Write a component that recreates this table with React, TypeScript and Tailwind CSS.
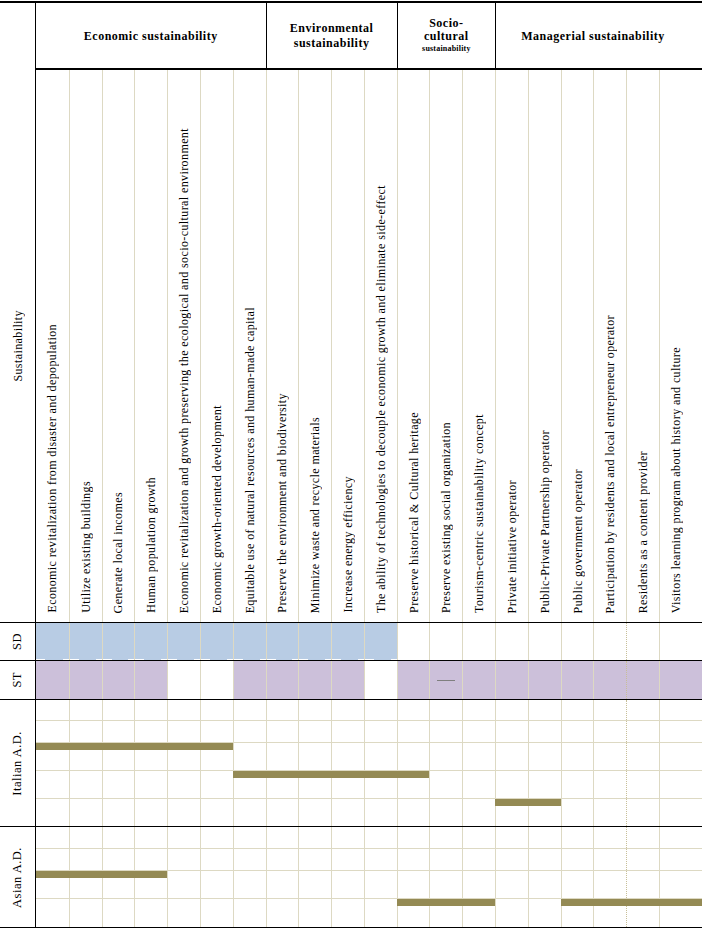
const COLS = "grid grid-cols-[36px_repeat(19,minmax(0,1fr))_43px]";
const DATA_COLS = "grid grid-cols-[repeat(19,minmax(0,1fr))_43px]";
const SERIF = "font-['Liberation_Serif','Times_New_Roman',serif]";

const criteria = [
  "Economic revitalization from disaster and depopulation",
  "Utilize existing buildings",
  "Generate local incomes",
  "Human population growth",
  "Economic revitalization and growth preserving the ecological and socio-cultural environment",
  "Economic growth-oriented development",
  "Equitable use of natural resources and human-made capital",
  "Preserve the environment and biodiversity",
  "Minimize waste and recycle materials",
  "Increase energy efficiency",
  "The ability of technologies to decouple economic growth and eliminate side-effect",
  "Preserve historical & Cultural heritage",
  "Preserve existing social organization",
  "Tourism-centric sustainability concept",
  "Private initiative operator",
  "Public-Private Partnership operator",
  "Public government operator",
  "Participation by residents and local entrepreneur operator",
  "Residents as a content provider",
  "Visitors learning program about history and culture",
];

const sd = [1, 1, 1, 1, 1, 1, 1, 1, 1, 1, 1, 0, 0, 0, 0, 0, 0, 0, 0, 0];
const st = [1, 1, 1, 1, 0, 0, 1, 1, 1, 1, 0, 1, 1, 1, 1, 1, 1, 1, 1, 1];

type Bar = { row: number; cls: string };

const italianBars: Bar[] = [
  { row: 2, cls: "col-start-1 col-span-6" },
  { row: 3, cls: "col-start-7 col-span-6" },
  { row: 4, cls: "col-start-15 col-span-2" },
];

const asianBars: Bar[] = [
  { row: 2, cls: "col-start-1 col-span-4" },
  { row: 3, cls: "col-start-12 col-span-3" },
  { row: 3, cls: "col-start-17 col-span-4" },
];

// left border of data column i (0-based); column 18 turns dotted below the text row
function edge(i: number, dotted = false) {
  if (i === 0) return "";
  if (dotted && i === 18) return "border-l border-dotted border-[#c8bf98]";
  return "border-l border-[#ddd9c3]";
}

function Vertical({ children, className = "" }: { children: React.ReactNode; className?: string }) {
  return (
    <span className={`[writing-mode:vertical-rl] rotate-180 whitespace-nowrap leading-none ${className}`}>
      {children}
    </span>
  );
}

function Label({ text, size = "text-[12px] tracking-[0.4px]" }: { text: string; size?: string }) {
  return (
    <div className="h-full border-r border-black flex items-center justify-center">
      <Vertical className={size}>{text}</Vertical>
    </div>
  );
}

function Block({ label, heights, bars, last }: { label: string; heights: string[]; bars: Bar[]; last?: boolean }) {
  return (
    <div className={`flex border-t border-black ${last ? "border-b" : ""}`}>
      <div className="w-[36px] shrink-0">
        <Label text={label} size="text-[12.5px] tracking-[0.5px]" />
      </div>
      <div className="flex-1 flex flex-col">
        {heights.map((h, r) => (
          <div key={r} className={`relative ${DATA_COLS} ${h} ${r > 0 ? "border-t border-[#ddd9c3]" : ""}`}>
            {criteria.map((_, i) => (
              <div key={i} className={edge(i, true)} />
            ))}
            <div className={`absolute inset-x-0 top-0 ${DATA_COLS}`}>
              {bars
                .filter((b) => b.row === r)
                .map((b, j) => (
                  <div key={j} className={`${b.cls} h-[7px] bg-[#948a54]`} />
                ))}
            </div>
          </div>
        ))}
      </div>
    </div>
  );
}

export default function App() {
  return (
    <div className={`w-[702px] h-[930px] bg-white text-black ${SERIF} overflow-hidden`}>
      {/* group header */}
      <div className={`${COLS} h-[69px] mt-px font-bold tracking-[0.5px]`}>
        <div className="border-t-2 border-r border-black" />
        <div className="col-span-7 border-y-2 border-black flex items-center justify-center text-[12px]">
          Economic sustainability
        </div>
        <div className="col-span-4 border-y-2 border-l border-black flex items-center justify-center text-center text-[12px] leading-[15px]">
          Environmental
          <br />
          sustainability
        </div>
        <div className="col-span-3 border-y-2 border-l border-black flex flex-col items-center justify-center text-center text-[12px] leading-[13px]">
          <span>Socio-</span>
          <span>cultural</span>
          <span className="text-[8px] leading-[12px] tracking-[0.2px]">sustainability</span>
        </div>
        <div className="col-span-6 border-y-2 border-l border-black flex items-center justify-center pr-[12px] text-[12px]">
          Managerial sustainability
        </div>
      </div>

      {/* criteria */}
      <div className={`${COLS} h-[552px]`}>
        <Label text="Sustainability" />
        {criteria.map((c, i) => (
          <div
            key={i}
            className={`${edge(i)} flex items-end justify-center pb-[9px] ${i === 19 ? "pr-[10px]" : ""}`}
          >
            <Vertical className="text-[12px] tracking-[0.4px]">{c}</Vertical>
          </div>
        ))}
      </div>

      {/* SD */}
      <div className={`${COLS} h-[38px] border-t border-black`}>
        <Label text="SD" size="text-[12.5px] tracking-[0.5px]" />
        {sd.map((on, i) => (
          <div key={i} className={`relative ${edge(i, true)} ${on ? "bg-[#b8cce4]" : ""}`}>
            {on ? (
              <>
                <span className="absolute bottom-0 left-0 w-[9px] h-px bg-white" />
                <span className="absolute bottom-0 right-0 w-[6px] h-px bg-white" />
              </>
            ) : null}
          </div>
        ))}
      </div>

      {/* ST */}
      <div className={`${COLS} h-[39px] border-t border-black`}>
        <Label text="ST" size="text-[12.5px] tracking-[0.5px]" />
        {st.map((on, i) => (
          <div
            key={i}
            className={`${edge(i, true)} ${on ? "bg-[#ccc0da]" : ""} flex items-center justify-center`}
          >
            {i === 12 ? <span className="w-[18px] h-px bg-[#7f7f7f]" /> : null}
          </div>
        ))}
      </div>

      <Block
        label="Italian A.D."
        heights={["h-[20px]", "h-[22px]", "h-[28px]", "h-[28px]", "h-[28px]"]}
        bars={italianBars}
      />
      <Block
        label="Asian A.D."
        heights={["h-[21px]", "h-[22px]", "h-[28px]", "h-[29px]"]}
        bars={asianBars}
        last
      />
    </div>
  );
}
